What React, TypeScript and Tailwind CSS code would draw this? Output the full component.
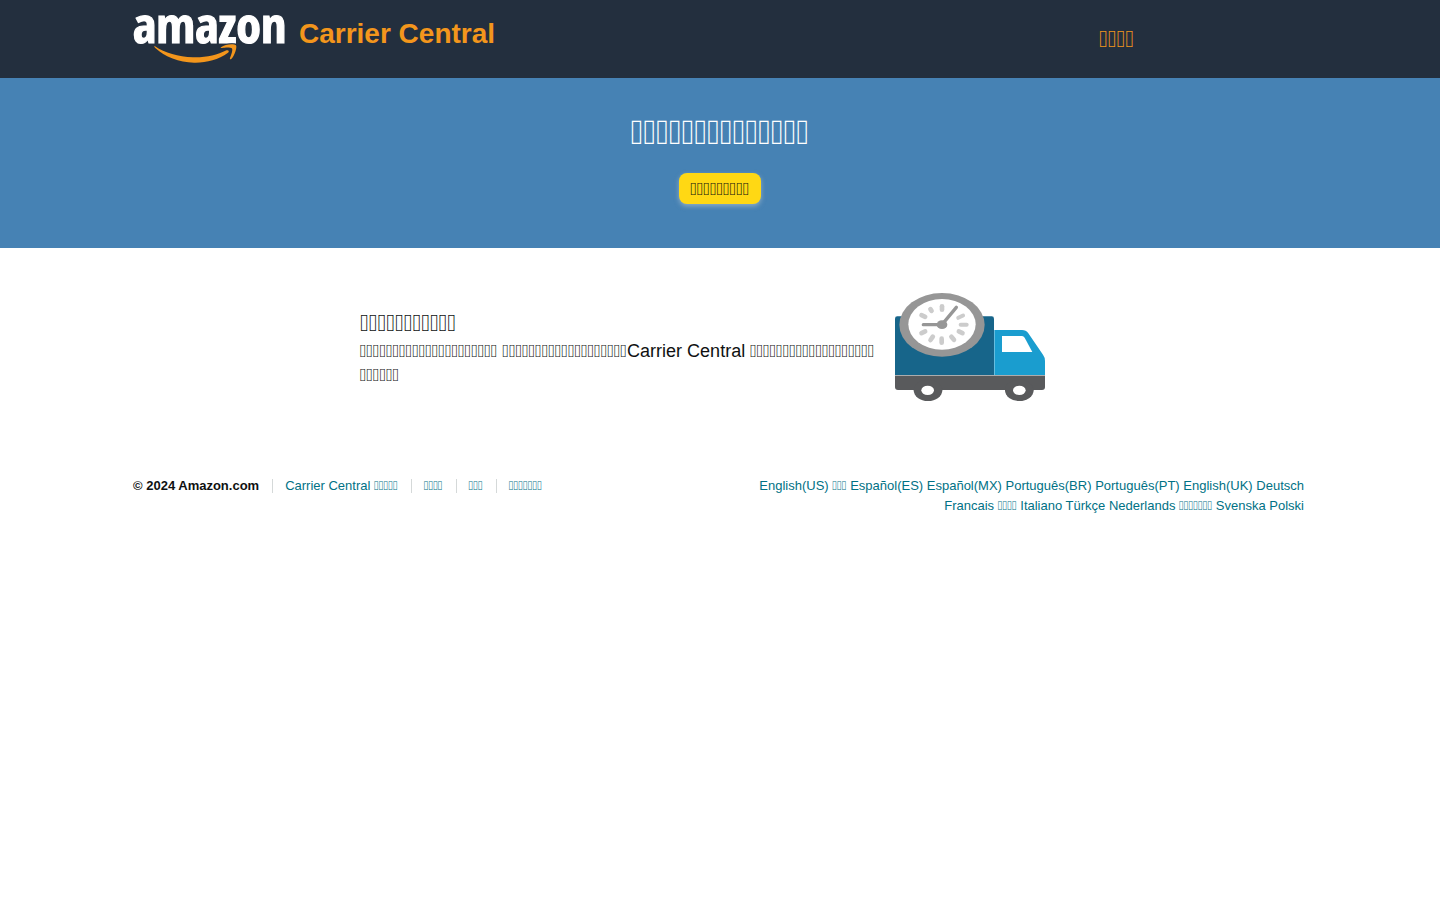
import React from 'react';

// A code point without a glyph in any installed font; lines may break around it.
const BOX = '\u{3A000}';

function Boxes({ count }: { count: number }) {
  return <span className="font-['DejaVu_Math_TeX_Gyre',sans-serif] leading-none">{BOX.repeat(count)}</span>;
}

function Logo() {
  return (
    <svg className="h-[50px] w-[154px] overflow-visible" viewBox="0 0 154 50" role="img" aria-label="amazon">
      <text
        x="0"
        y="28.4"
        fontSize="50"
        fontWeight="700"
        fill="#fff"
        stroke="#fff"
        strokeWidth="1.2"
        fontFamily="'Open Sans Condensed', 'Open Sans', sans-serif"
      >
        amazon
      </text>
      <path
        d="M22 31.2C32 38 45 41.5 60 42.3C73 42.7 84 40 93.5 35.3C95.5 34.6 96.7 36.3 95 37.8C85 45 73 48 61 47.7C46 47.2 32 42 22 32.8C21 31.8 21.2 30.8 22 31.2Z"
        fill="#f3961c"
      />
      <path
        d="M88 32.3C92 28.9 101 28.4 103 30.2C104.3 32.5 101.5 40.8 98.5 43.8C97.5 44.8 96.5 44.2 97 43C98.2 40 100 35 99 33.5C97.8 32 92 32.4 89.3 32.9C88 33.2 87.3 32.9 88 32.3Z"
        fill="#f3961c"
        stroke="#232f3e"
        strokeWidth="1.6"
        paintOrder="stroke"
      />
    </svg>
  );
}

function ClockTicks() {
  const ticks = [
    [171, 69, 0, 8, 12], [138, 75, -35, 8, 10], [115, 93, -65, 8, 13], [115, 142, 65, 8, 13],
    [140, 160, 35, 8, 13], [170, 167, 0, 8, 13], [203, 160, -40, 8, 13], [227, 142, -65, 8, 13],
    [236, 119, 90, 7, 15], [227, 95, 65, 7, 14],
  ];
  return (
    <>
      {ticks.map(([x, y, angle, rx, ry]) => (
        <rect
          key={`${x}-${y}`}
          x={x - rx + 1}
          y={y - ry}
          width={2 * rx - 2}
          height={2 * ry}
          rx={rx - 1}
          fill="#ccc"
          transform={`rotate(${angle} ${x} ${y})`}
        />
      ))}
    </>
  );
}

function Truck() {
  return (
    <svg className="h-[108px] w-[150px] shrink-0" viewBox="30 24 450 324" aria-hidden="true">
      <path d="M37 94H320Q327 94 327 101V270H30V101Q30 94 37 94Z" fill="#17658a" />
      <path d="M328 135H411Q423 135 430 145L474 209Q480 217 480 228V270H328Z" fill="#1a9dcf" />
      <path d="M351 153H411Q416 153 419 158L442 201H351Z" fill="#fff" />
      <path d="M30 271.5H480V306Q480 315 471 315H39Q30 315 30 306Z" fill="#595a5c" />
      <ellipse cx="129" cy="316" rx="43" ry="32" fill="#595a5c" />
      <ellipse cx="403" cy="316" rx="43" ry="32" fill="#595a5c" />
      <ellipse cx="128" cy="316" rx="19" ry="14" fill="#fff" />
      <ellipse cx="403" cy="316" rx="19" ry="14" fill="#fff" />
      <ellipse cx="171" cy="119.5" rx="128" ry="95.5" fill="#969696" />
      <ellipse cx="171" cy="118" rx="101" ry="76" fill="#fff" />
      <ClockTicks />
      <path d="M115 119H171L214 67" fill="none" stroke="#969696" strokeWidth="10" strokeLinecap="round" />
      <ellipse cx="171" cy="119" rx="16" ry="13" fill="#969696" />
    </svg>
  );
}

const footerLinks: { text?: string; boxes: number }[] = [
  { text: 'Carrier Central ', boxes: 5 },
  { boxes: 4 },
  { boxes: 3 },
  { boxes: 7 },
];

// A number stands for a language name that is drawn as that many boxes.
const languages: (string | number)[] = [
  'English(US)', 3, 'Español(ES)', 'Español(MX)', 'Português(BR)', 'Português(PT)', 'English(UK)',
  'Deutsch', 'Francais', 4, 'Italiano', 'Türkçe', 'Nederlands', 7, 'Svenska', 'Polski',
];

export default function App() {
  return (
    <div className="min-h-screen bg-white font-['Liberation_Sans',Arial,sans-serif] text-[#0f1111]">
      <header className="flex h-[78px] justify-between bg-[#232f3e] px-[133px]">
        <a href="#home" className="flex items-start gap-3 pt-[15px]">
          <Logo />
          <span className="text-[28px] leading-[38px] font-bold text-[#f3961c]">Carrier Central</span>
        </a>
        <div className="flex w-[208px] items-center">
          <a href="#signin" className="text-2xl text-[#f3961c]"><Boxes count={4} /></a>
        </div>
      </header>

      <main>
        <section className="flex h-[170px] flex-col items-center bg-[#4682b4] pt-8">
          <h1 className="text-[35px] leading-[44px] text-white"><Boxes count={14} /></h1>
          <button
            type="button"
            className="mt-[19px] h-[31px] cursor-pointer rounded-lg bg-[#ffd814] px-3 text-lg leading-[30px] shadow-[0_2px_5px_rgba(213,217,217,0.5)]"
          >
            <Boxes count={9} />
          </button>
        </section>

        <section className="mx-auto flex max-w-[720px] gap-[15px] pt-[45px]">
          <div className="w-[520px] pt-[14px]">
            <h2 className="text-2xl leading-8"><Boxes count={11} /></h2>
            <p className="text-lg leading-6">
              <Boxes count={21} /> <Boxes count={19} />Carrier Central <Boxes count={25} />
            </p>
          </div>
          <Truck />
        </section>
      </main>

      <footer className="mt-[75px] flex items-start justify-between pr-[136px] pl-[133px] text-[13px] leading-5">
        <div className="flex">
          <span className="pr-[13px] font-bold">© 2024 Amazon.com</span>
          <ul className="flex items-center">
            {footerLinks.map(({ text, boxes }) => (
              <li key={boxes} className="my-[3px] flex h-[14px] items-center border-l border-[#d5d9d9] pr-[13px] pl-3">
                <a href="#footer" className="text-[#007185]">{text}<Boxes count={boxes} /></a>
              </li>
            ))}
          </ul>
        </div>
        <nav className="max-w-[580px] text-right text-[#007185]" aria-label="Languages">
          {languages.map((language) => (
            <React.Fragment key={language}>
              <a href="#language">{typeof language === 'number' ? <Boxes count={language} /> : language}</a>{' '}
            </React.Fragment>
          ))}
        </nav>
      </footer>
    </div>
  );
}
